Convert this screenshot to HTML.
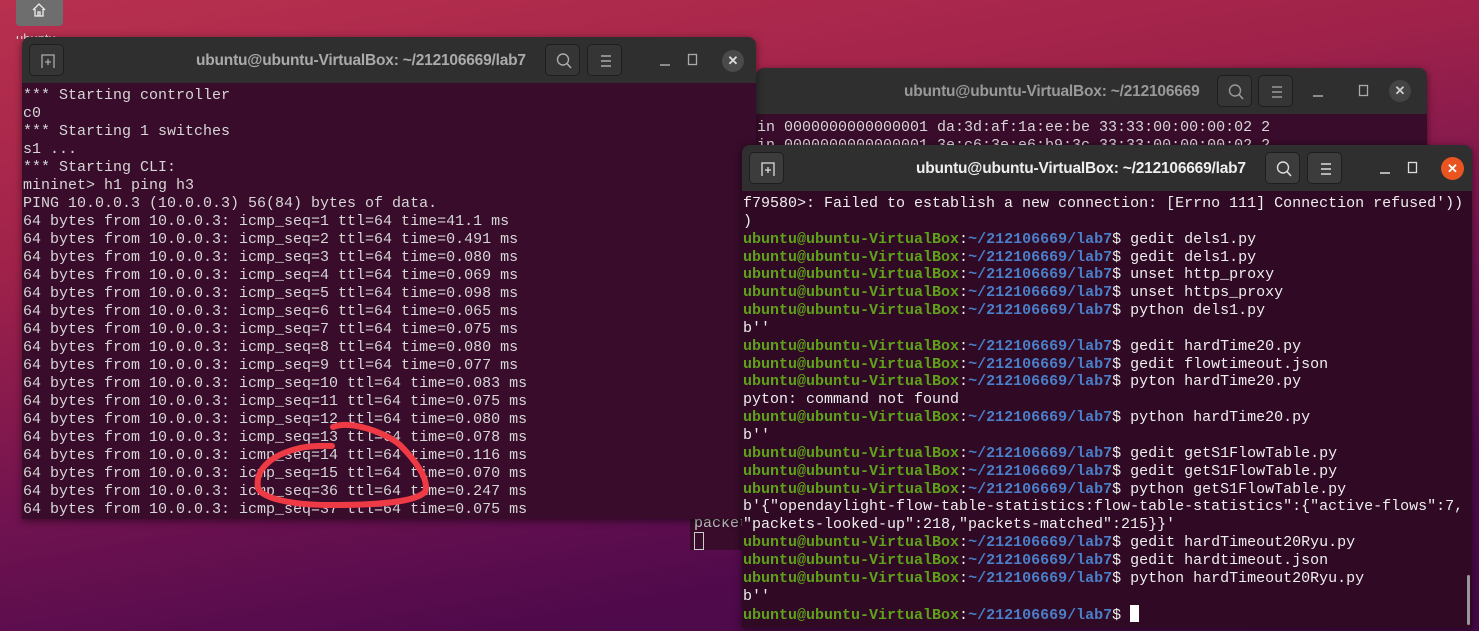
<!DOCTYPE html>
<html><head><meta charset="utf-8"><style>
*{margin:0;padding:0;box-sizing:border-box}
body{width:1479px;height:631px;overflow:hidden;position:relative;font-family:"Liberation Sans",sans-serif;
background:linear-gradient(170deg,#b8304e 0%,#a0224a 30%,#6e1250 60%,#500a4c 80%,#460848 100%);}
.win{position:absolute;border-radius:8px 8px 0 0;overflow:hidden;box-shadow:0 2px 8px rgba(0,0,0,.5)}
.tb{position:absolute;left:0;right:0;top:0;height:46px;background:#2f2f2f;color:#aaa;font-weight:bold;font-size:15.5px}
.tb .t{position:absolute;top:15px;white-space:nowrap;letter-spacing:-0.2px}
.btn{position:absolute;top:7px;width:35px;height:32px;border:1px solid #1e1e1e;border-radius:5px;background:#353535}
.btn svg{position:absolute;left:9px;top:7px}
.con{position:absolute;left:0;right:0;top:46px;bottom:0;background:#380c2a;font-family:"Liberation Mono",monospace;font-size:15px;line-height:18px;white-space:pre;color:#d6d6d6;padding:4px 0 0 1px}
.g{color:#5ea21a;font-weight:bold}.b{color:#4a7fc9;font-weight:bold}
.ic{position:absolute}
</style></head><body>
<div style="position:absolute;left:16px;top:-4px;width:47px;height:30px;background:#6e6e6e;border-radius:4px"></div>
<svg style="position:absolute;left:31px;top:2px" width="16" height="16" viewBox="0 0 16 16"><path d="M2 8 L8 2 L14 8 M4 7 V14 H12 V7 M7 14 V10 H9 V14" fill="none" stroke="#eee" stroke-width="1.3"/></svg>
<div style="position:absolute;left:16px;top:31px;color:#ddd;font-size:13px;height:8px;overflow:hidden">ubuntu</div>

<!-- back window 2 -->
<div class="win" style="left:756px;top:68px;width:671px;height:90px">
 <div class="tb"><div class="t" style="left:148px;color:#999">ubuntu@ubuntu-VirtualBox: ~/212106669</div>
 <div class="btn" style="left:461px"><svg width="18" height="18"><circle cx="8" cy="7.5" r="5.5" fill="none" stroke="#999" stroke-width="1.4"/><path d="M12 11.5 L16 16" stroke="#999" stroke-width="1.6"/></svg></div>
 <div class="btn" style="left:502px"><svg width="18" height="18"><path d="M4 4H14M4 9H14M4 14H14" stroke="#999" stroke-width="1.4"/></svg></div>
 <svg class="ic" style="left:556px;top:16px" width="12" height="14"><path d="M1 12H11" stroke="#aaa" stroke-width="1.4"/></svg>
 <svg class="ic" style="left:602px;top:16px" width="12" height="14"><rect x="1.5" y="1.5" width="8" height="10" fill="none" stroke="#aaa" stroke-width="1.3"/></svg>
 <div style="position:absolute;left:633px;top:12px;width:22px;height:22px;border-radius:50%;background:#444;color:#ccc;text-align:center;line-height:22px;font-size:13px">✕</div></div>
 <div class="con" style="top:46px;padding-top:5px">in 0000000000000001 da:3d:af:1a:ee:be 33:33:00:00:00:02 2
in 0000000000000001 3e:c6:3e:e6:b9:3c 33:33:00:00:00:02 2</div>
</div>
<div style="position:absolute;left:690px;top:516px;width:55px;height:34px;background:#380c2a;font-family:'Liberation Mono',monospace;font-size:15px;color:#ccc;padding:0 0 0 4px;line-height:16px;overflow:hidden">packet<br><span style="display:inline-block;width:10px;height:18px;border:1px solid #ccc"></span></div>

<!-- window 1 -->
<div class="win" style="left:22px;top:37px;width:734px;height:482px">
 <div class="tb"><div class="t" style="left:174px">ubuntu@ubuntu-VirtualBox: ~/212106669/lab7</div>
 <div class="btn" style="left:7px"><svg width="18" height="18"><path d="M3 16V3H15V16" fill="none" stroke="#aaa" stroke-width="1.3"/><path d="M9 7V13M6 10H12" stroke="#aaa" stroke-width="1.3"/></svg></div>
 <div class="btn" style="left:523px"><svg width="18" height="18"><circle cx="8" cy="7.5" r="5.5" fill="none" stroke="#aaa" stroke-width="1.4"/><path d="M12 11.5 L16 16" stroke="#aaa" stroke-width="1.6"/></svg></div>
 <div class="btn" style="left:565px"><svg width="18" height="18"><path d="M4 4H14M4 9H14M4 14H14" stroke="#aaa" stroke-width="1.4"/></svg></div>
 <svg class="ic" style="left:637px;top:16px" width="12" height="14"><path d="M1 12H11" stroke="#aaa" stroke-width="1.4"/></svg>
 <svg class="ic" style="left:665px;top:16px" width="12" height="14"><rect x="1.5" y="1.5" width="8" height="10" fill="none" stroke="#aaa" stroke-width="1.3"/></svg>
 <div style="position:absolute;left:700px;top:13px;width:22px;height:22px;border-radius:50%;background:#4a4a4a;color:#ddd;text-align:center;line-height:22px;font-size:13px">✕</div></div>
 <div class="con">*** Starting controller
c0
*** Starting 1 switches
s1 ...
*** Starting CLI:
mininet&gt; h1 ping h3
PING 10.0.0.3 (10.0.0.3) 56(84) bytes of data.
64 bytes from 10.0.0.3: icmp_seq=1 ttl=64 time=41.1 ms
64 bytes from 10.0.0.3: icmp_seq=2 ttl=64 time=0.491 ms
64 bytes from 10.0.0.3: icmp_seq=3 ttl=64 time=0.080 ms
64 bytes from 10.0.0.3: icmp_seq=4 ttl=64 time=0.069 ms
64 bytes from 10.0.0.3: icmp_seq=5 ttl=64 time=0.098 ms
64 bytes from 10.0.0.3: icmp_seq=6 ttl=64 time=0.065 ms
64 bytes from 10.0.0.3: icmp_seq=7 ttl=64 time=0.075 ms
64 bytes from 10.0.0.3: icmp_seq=8 ttl=64 time=0.080 ms
64 bytes from 10.0.0.3: icmp_seq=9 ttl=64 time=0.077 ms
64 bytes from 10.0.0.3: icmp_seq=10 ttl=64 time=0.083 ms
64 bytes from 10.0.0.3: icmp_seq=11 ttl=64 time=0.075 ms
64 bytes from 10.0.0.3: icmp_seq=12 ttl=64 time=0.080 ms
64 bytes from 10.0.0.3: icmp_seq=13 ttl=64 time=0.078 ms
64 bytes from 10.0.0.3: icmp_seq=14 ttl=64 time=0.116 ms
64 bytes from 10.0.0.3: icmp_seq=15 ttl=64 time=0.070 ms
64 bytes from 10.0.0.3: icmp_seq=36 ttl=64 time=0.247 ms
64 bytes from 10.0.0.3: icmp_seq=37 ttl=64 time=0.075 ms</div>
</div>
<svg style="position:absolute;left:0;top:0" width="1479" height="631"><path d="M333 427 C350 420 385 432 400 445 C415 460 430 480 425 492 C415 502 380 505 330 505 C290 505 262 498 258 488 C255 470 270 455 300 448 C315 445 325 446 332 446" fill="none" stroke="#ee3a44" stroke-width="6" stroke-linecap="round"/></svg>

<!-- window 3 -->
<div class="win" style="left:742px;top:145px;width:730px;height:483px">
 <div class="tb" style="color:#eee"><div class="t" style="left:174px">ubuntu@ubuntu-VirtualBox: ~/212106669/lab7</div>
 <div class="btn" style="left:7px;background:#3c3c3c"><svg width="18" height="18"><path d="M3 16V3H15V16" fill="none" stroke="#ddd" stroke-width="1.3"/><path d="M9 7V13M6 10H12" stroke="#ddd" stroke-width="1.3"/></svg></div>
 <div class="btn" style="left:523px;background:#3c3c3c"><svg width="18" height="18"><circle cx="8" cy="7.5" r="5.5" fill="none" stroke="#ddd" stroke-width="1.4"/><path d="M12 11.5 L16 16" stroke="#ddd" stroke-width="1.6"/></svg></div>
 <div class="btn" style="left:565px;background:#3c3c3c"><svg width="18" height="18"><path d="M4 4H14M4 9H14M4 14H14" stroke="#ddd" stroke-width="1.4"/></svg></div>
 <svg class="ic" style="left:637px;top:16px" width="12" height="14"><path d="M1 12H11" stroke="#ddd" stroke-width="1.4"/></svg>
 <svg class="ic" style="left:665px;top:16px" width="12" height="14"><rect x="1.5" y="1.5" width="8" height="10" fill="none" stroke="#ddd" stroke-width="1.3"/></svg>
 <div style="position:absolute;left:699px;top:12px;width:23px;height:23px;border-radius:50%;background:#e95420;color:#fff;text-align:center;line-height:23px;font-size:13px">✕</div></div>
 <div class="con" style="color:#eeeeee;background:#300a24;padding-top:4px;line-height:17.85px">f79580&gt;: Failed to establish a new connection: [Errno 111] Connection refused'))
)
<span class="g">ubuntu@ubuntu-VirtualBox</span>:<span class="b">~/212106669/lab7</span>$ gedit dels1.py
<span class="g">ubuntu@ubuntu-VirtualBox</span>:<span class="b">~/212106669/lab7</span>$ gedit dels1.py
<span class="g">ubuntu@ubuntu-VirtualBox</span>:<span class="b">~/212106669/lab7</span>$ unset http_proxy
<span class="g">ubuntu@ubuntu-VirtualBox</span>:<span class="b">~/212106669/lab7</span>$ unset https_proxy
<span class="g">ubuntu@ubuntu-VirtualBox</span>:<span class="b">~/212106669/lab7</span>$ python dels1.py
b''
<span class="g">ubuntu@ubuntu-VirtualBox</span>:<span class="b">~/212106669/lab7</span>$ gedit hardTime20.py
<span class="g">ubuntu@ubuntu-VirtualBox</span>:<span class="b">~/212106669/lab7</span>$ gedit flowtimeout.json
<span class="g">ubuntu@ubuntu-VirtualBox</span>:<span class="b">~/212106669/lab7</span>$ pyton hardTime20.py
pyton: command not found
<span class="g">ubuntu@ubuntu-VirtualBox</span>:<span class="b">~/212106669/lab7</span>$ python hardTime20.py
b''
<span class="g">ubuntu@ubuntu-VirtualBox</span>:<span class="b">~/212106669/lab7</span>$ gedit getS1FlowTable.py
<span class="g">ubuntu@ubuntu-VirtualBox</span>:<span class="b">~/212106669/lab7</span>$ gedit getS1FlowTable.py
<span class="g">ubuntu@ubuntu-VirtualBox</span>:<span class="b">~/212106669/lab7</span>$ python getS1FlowTable.py
b'{"opendaylight-flow-table-statistics:flow-table-statistics":{"active-flows":7,
"packets-looked-up":218,"packets-matched":215}}'
<span class="g">ubuntu@ubuntu-VirtualBox</span>:<span class="b">~/212106669/lab7</span>$ gedit hardTimeout20Ryu.py
<span class="g">ubuntu@ubuntu-VirtualBox</span>:<span class="b">~/212106669/lab7</span>$ gedit hardtimeout.json
<span class="g">ubuntu@ubuntu-VirtualBox</span>:<span class="b">~/212106669/lab7</span>$ python hardTimeout20Ryu.py
b''
<span class="g">ubuntu@ubuntu-VirtualBox</span>:<span class="b">~/212106669/lab7</span>$ <span style="display:inline-block;width:9px;height:17px;background:#fff;vertical-align:-3px"></span></div>
 <div style="position:absolute;left:725px;top:430px;width:3px;height:50px;background:#999;border-radius:2px"></div>
</div>
</body></html>
